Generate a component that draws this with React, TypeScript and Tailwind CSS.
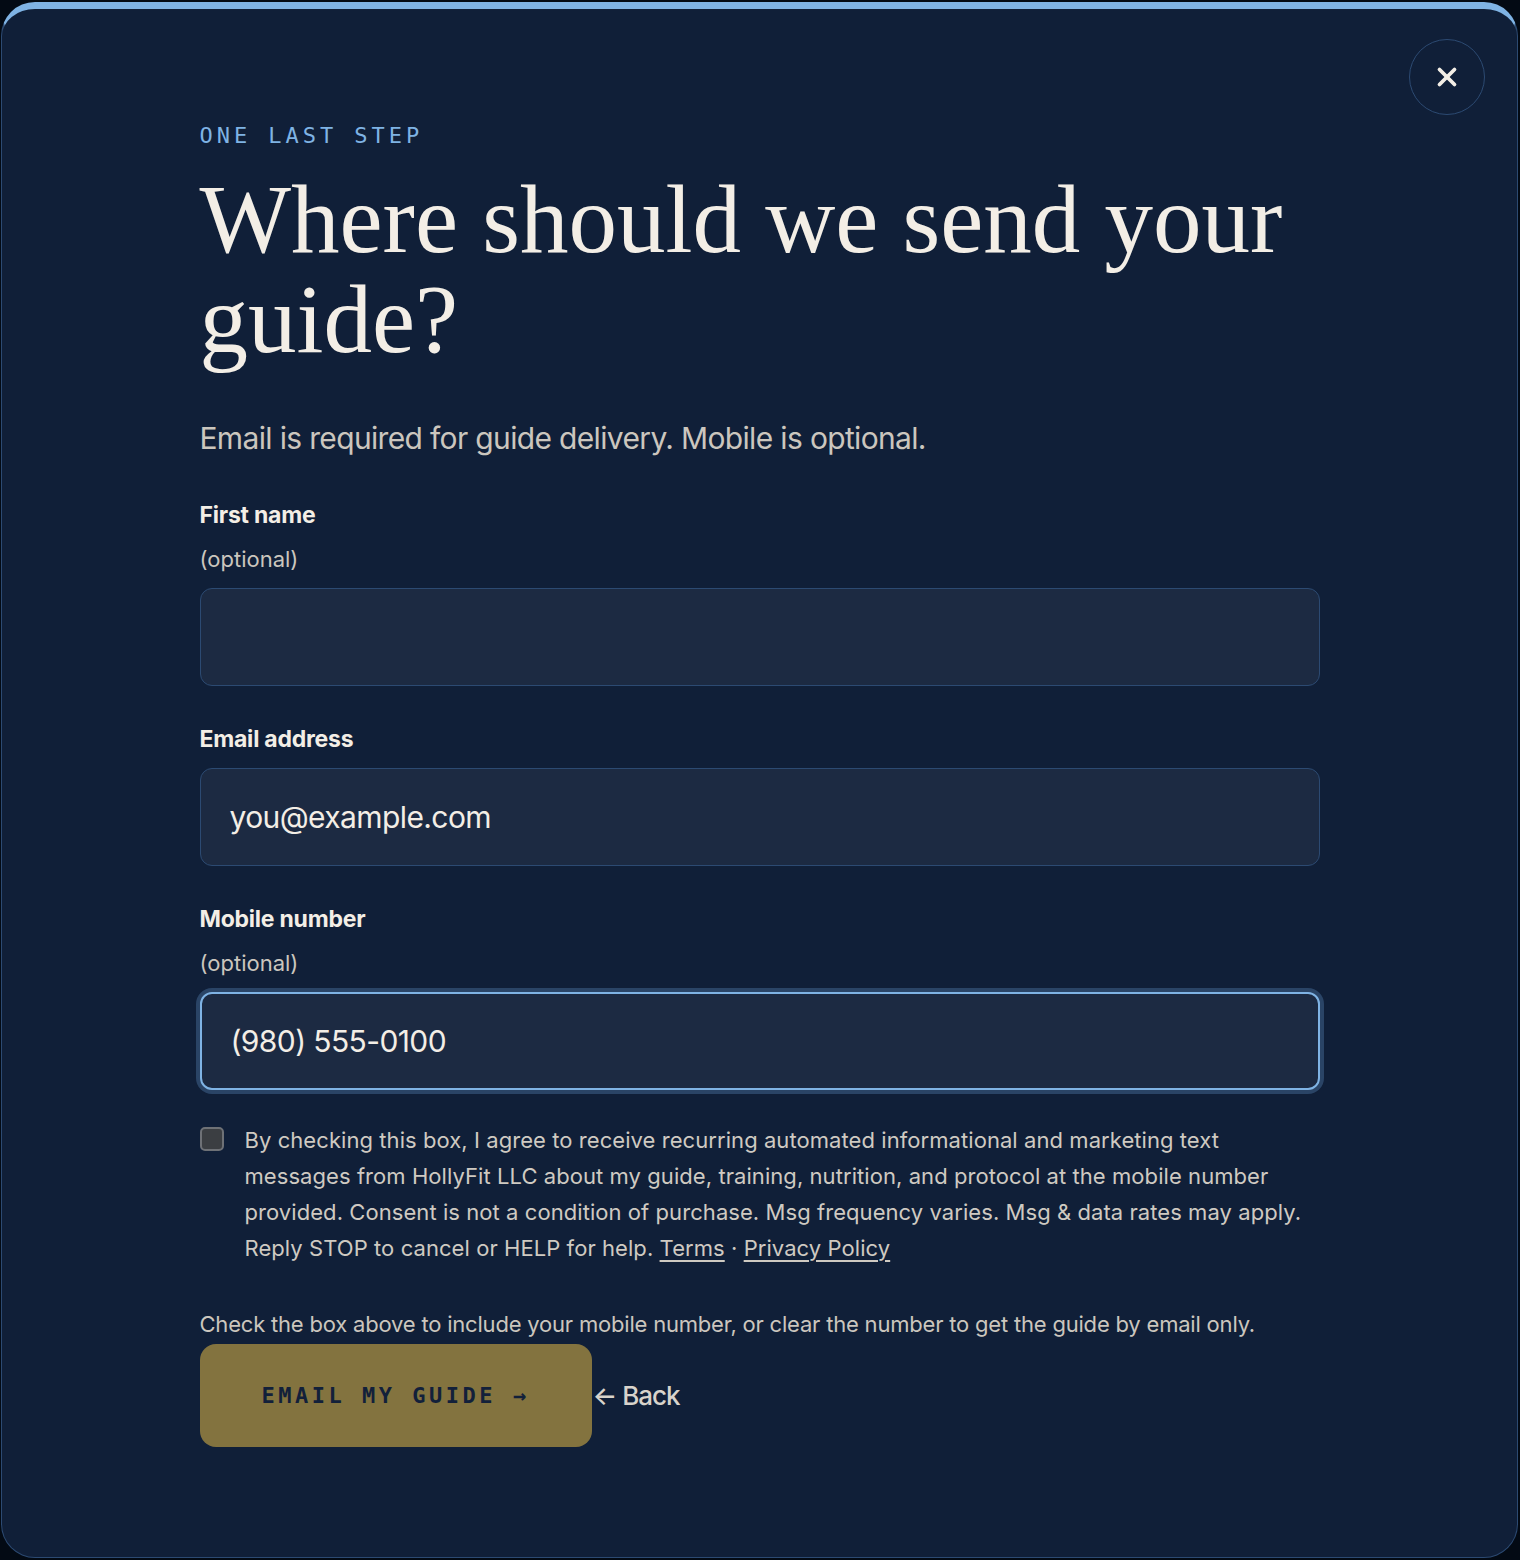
import { X } from "lucide-react";

const sans = "font-['Inter',_'Liberation_Sans',_sans-serif]";
const mono = "font-['DejaVu_Sans_Mono',_'Liberation_Mono',_monospace]";

function Field({
  label,
  optional,
  value,
  focused,
}: {
  label: string;
  optional?: boolean;
  value?: string;
  focused?: boolean;
}) {
  return (
    <div className="mt-[39px] first:mt-0">
      <div className="text-[23px] leading-[28px] font-bold tracking-[-0.01em] text-[#f3eee6]">
        {label}
      </div>
      {optional && (
        <div className="mt-4 text-[22px] leading-[28px] text-[#cbc6be]">(optional)</div>
      )}
      <div
        className={
          "mt-[15px] h-[98px] rounded-[12px] bg-[#1c2a42] px-[29px] flex items-center text-[30px] tracking-[-0.02em] text-[#f3eee6] " +
          (focused
            ? "border-2 border-[#7fb3e4] ring-4 ring-[#2a4466]"
            : "border border-[#2c4a72]")
        }
      >
        {value}
      </div>
    </div>
  );
}

export default function App() {
  return (
    <div className={`h-[1560px] bg-[#030a14] p-[2px] pl-px ${sans}`}>
      <div className="relative h-full rounded-[34px] border border-[#2c4a72] border-t-[7px] border-t-[#7fb3e4] bg-[#101f38]">
        {/* close */}
        <button className="absolute top-[30px] right-[32px] w-[76px] h-[76px] rounded-full border-[1.5px] border-[#2c4a72] flex items-center justify-center text-[#f3eee6]">
          <X size={30} strokeWidth={3} />
        </button>

        <div className="max-w-[1120px] mx-auto pt-[113px]">
          <div className={`${mono} text-[22px] leading-[28px] tracking-[0.18em] text-[#7fb3e4]`}>
            ONE LAST STEP
          </div>
          <h1 className="mt-[20px] font-['Liberation_Serif',_serif] text-[97px] leading-[100px] text-[#f3eee6]">
            Where should we send your guide?
          </h1>
          <p className="mt-[48px] text-[30px] leading-[40px] tracking-[-0.022em] text-[#cbc6be]">
            Email is required for guide delivery. Mobile is optional.
          </p>

          <div className="mt-[43px]">
            <Field label="First name" optional />
            <Field label="Email address" value="you@example.com" />
            <Field label="Mobile number" optional value="(980) 555-0100" focused />
          </div>

          <div className="mt-[32px] flex gap-[21px]">
            <span className="mt-[5px] shrink-0 w-6 h-6 rounded-[5px] border-2 border-[#6e7176] bg-[#3b3e42]" />
            <p className="max-w-[1060px] text-[22px] leading-[36px] tracking-[0.003em] text-[#cfcac2]">
              By checking this box, I agree to receive recurring automated informational and marketing text
              messages from HollyFit LLC about my guide, training, nutrition, and protocol at the mobile number
              provided. Consent is not a condition of purchase. Msg frequency varies. Msg &amp; data rates may apply.
              Reply STOP to cancel or HELP for help.{" "}
              <a className="underline underline-offset-4">Terms</a> ·{" "}
              <a className="underline underline-offset-4">Privacy Policy</a>
            </p>
          </div>

          <p className="mt-[44px] text-[22px] leading-[28px] tracking-[-0.009em] text-[#cbc6be]">
            Check the box above to include your mobile number, or clear the number to get the guide by email only.
          </p>

          <div className="mt-[6px] flex items-center">
            <button
              className={`${mono} w-[392px] h-[103px] rounded-[16px] bg-[#83733f] text-[22px] font-bold tracking-[0.16em] text-[#12203a]`}
            >
              EMAIL MY GUIDE →
            </button>
            <a className="ml-[1px] text-[26px] font-medium tracking-[-0.04em] text-[#d8d3cb]">← Back</a>
          </div>
        </div>
      </div>
    </div>
  );
}
